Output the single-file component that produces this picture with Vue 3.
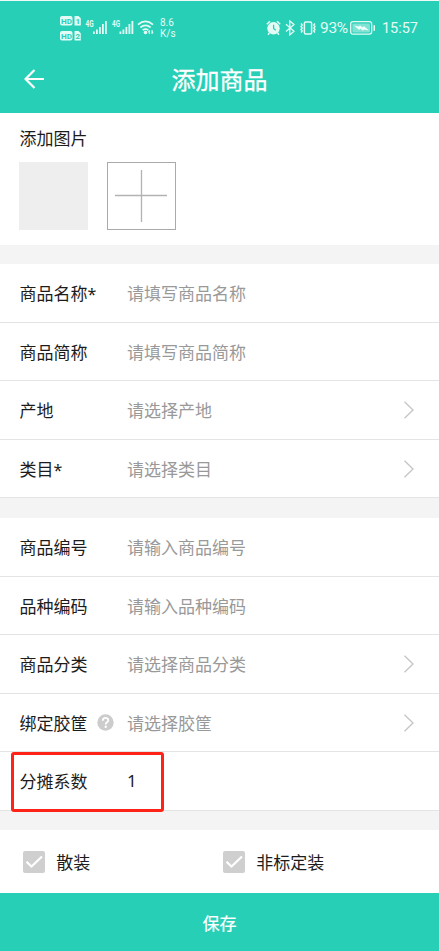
<script setup>
const basics = [
  { label: '商品名称', required: true, hint: '请填写商品名称' },
  { label: '商品简称', hint: '请填写商品简称' },
  { label: '产地', hint: '请选择产地', pick: true },
  { label: '类目', required: true, hint: '请选择类目', pick: true },
]
const details = [
  { label: '商品编号', hint: '请输入商品编号' },
  { label: '品种编码', hint: '请输入品种编码' },
  { label: '商品分类', hint: '请选择商品分类', pick: true },
  { label: '绑定胶筐', hint: '请选择胶筐', pick: true, help: true },
  { label: '分摊系数', value: '1', marked: true },
]
const groups = [basics, details]
const packs = ['散装', '非标定装']
</script>

<template>
  <div class="screen">
    <header class="head">
      <div class="status">
        <svg class="status-left" width="94" height="30" viewBox="0 0 94 30">
          <g fill="#e4fbf5">
            <rect x="0" y="1" width="12.5" height="9.4" rx="2" />
            <rect x="0" y="16" width="12.5" height="9.4" rx="2" />
            <path d="M14.5 1h4l2.3 2.3v7.1h-6.3zM14.5 16h4l2.3 2.3v7.1h-6.3z" />
            <g v-for="x in [33, 59.5]" :key="x">
              <rect :x="x" y="16.5" width="1.8" height="2.5" />
              <rect :x="x + 3" y="14.5" width="1.8" height="4.5" />
              <rect :x="x + 6" y="12" width="1.8" height="7" />
              <rect :x="x + 9" y="9" width="1.8" height="10" />
              <rect :x="x + 12" y="6" width="1.8" height="13" />
            </g>
            <circle cx="85.5" cy="17.5" r="1.8" />
            <path d="M89.3 19v-3.5l-1 1.1M92 15v3.7l1-1.2" stroke="#e4fbf5" stroke-width="1" />
          </g>
          <g fill="none" stroke="#e4fbf5" stroke-width="1.7">
            <path d="M78 9.6q7.5-6.5 15 0M80.4 12.5q5.1-4.4 10.2 0M82.7 15.2q2.8-2.2 5.6 0" />
          </g>
          <g>
            <text class="hd" x="1.1" y="8.6">HD</text>
            <text class="hd" x="1.1" y="23.6">HD</text>
            <text class="hd" x="15.6" y="8.6">1</text>
            <text class="hd" x="15.6" y="23.6">2</text>
            <text class="gen" x="25.5" y="11.5" textLength="8" lengthAdjust="spacingAndGlyphs">4G</text>
            <text class="gen" x="52" y="11.5" textLength="8" lengthAdjust="spacingAndGlyphs">4G</text>
          </g>
        </svg>
        <div class="rate"><span>8.6</span><span>K/s</span></div>
        <div class="status-right">
          <svg width="51" height="16" viewBox="0 0 51 16" fill="none" stroke="#e4fbf5">
            <circle cx="7.5" cy="8.3" r="6.2" fill="#e4fbf5" stroke="none" />
            <path d="M.8 4.3L4 1.2M14.2 4.3L11 1.2M3.3 13l-1.2 1.7M11.7 13l1.2 1.7" stroke-width="1.5" />
            <path d="M7.6 4.8v3.7l2.2 1.8" stroke="#27cfb6" stroke-width="1.3" />
            <path d="M20 4.3l8 7-4.2 3.6V.9L28 4.5l-8 7" stroke-width="1.3" />
            <rect x="38.4" y="2" width="7.2" height="12" rx="1.2" stroke-width="1.5" />
            <path d="M35 3.5l1.2 1.5L35 6.5 36.2 8 35 9.5l1.2 1.5L35 12.5M49 3.5L47.8 5 49 6.5 47.8 8 49 9.5 47.8 11l1.2 1.5" stroke-width="1.4" />
          </svg>
          <span class="percent">93%</span>
          <svg width="26" height="14" viewBox="0 0 26 14">
            <rect x=".7" y=".7" width="21" height="12.4" rx="2.4" fill="none" stroke="#e4fbf5" stroke-width="1.3" />
            <rect x="2.4" y="2.4" width="17.6" height="9" rx="1" fill="#7fe3d3" />
            <path d="M4 4.500l5 1 .8-1.300 3 2.200.9-1.300L19 9.600l-5.200-1-.7 1.200-3-2.200-.9 1.300z" fill="#f2fffc" />
            <rect x="23.5" y="4" width="1.5" height="6" rx=".7" fill="#e4fbf5" />
          </svg>
          <span class="clock">15:57</span>
        </div>
      </div>
      <div class="bar">
        <svg class="back" width="20" height="20" viewBox="0 0 20 20" fill="none" stroke="#fff" stroke-width="2.2">
          <path d="M20 10H1.5M10.5 1L1.5 10l9 9" />
        </svg>
        <h1>添加商品</h1>
      </div>
    </header>

    <section class="photos">
      <div class="photos-title">添加图片</div>
      <div class="tiles">
        <div class="tile"></div>
        <div class="tile add">
          <svg width="53" height="52" viewBox="0 0 53 52" stroke="#b2b2b2" stroke-width="1.3">
            <path d="M0 25.5h52M26.5 0v52" />
          </svg>
        </div>
      </div>
    </section>

    <section v-for="(rows, g) in groups" :key="g" class="group">
      <div v-for="row in rows" :key="row.label" class="row" :class="{ marked: row.marked }">
        <div class="label">
          <span>{{ row.label }}<span v-if="row.required" class="star">*</span></span>
          <svg v-if="row.help" class="help" width="17" height="17" viewBox="0 0 17 17">
            <circle cx="8.5" cy="8.5" r="8.2" fill="#ccc" />
            <path d="M5.8 6.7c0-3.7 5.5-3.5 5.5-.3 0 1.9-2.6 1.9-2.6 4" fill="none" stroke="#fff" stroke-width="1.8" />
            <circle cx="8.7" cy="12.7" r="1.2" fill="#fff" />
          </svg>
        </div>
        <div class="field" :class="{ filled: row.value }">{{ row.value || row.hint }}</div>
        <svg v-if="row.pick" width="12" height="18" viewBox="0 0 12 18" fill="none" stroke="#c4c4c4" stroke-width="1.3">
          <path d="M1.5 .8L10 9l-8.5 8.2" />
        </svg>
      </div>
    </section>

    <section class="packs">
      <div v-for="name in packs" :key="name" class="pack">
        <svg width="22" height="22" viewBox="0 0 22 22">
          <rect width="22" height="22" rx="2" fill="#cfcfcf" />
          <path d="M3.5 10.7l5 4.8L19 5.5" fill="none" stroke="#fff" stroke-width="2.2" />
        </svg>
        <span>{{ name }}</span>
      </div>
    </section>

    <button class="save">保存</button>
  </div>
</template>

<style>
body { margin: 0; }
</style>

<style scoped>
.screen {
  display: flex;
  flex-direction: column;
  width: 439px;
  height: 951px;
  overflow: hidden;
  background: #f4f4f4;
  color: #1c1c1c;
  font-family: "Noto Sans CJK SC", sans-serif;
  font-size: 17px;
  line-height: 24px;
}
.head {
  flex: none;
  height: 113px;
  box-sizing: border-box;
  border-top: 1px solid #eefaf7;
  background: #27cfb6;
}
.status {
  display: flex;
  height: 45px;
  padding: 14px 21px 0 60px;
  box-sizing: border-box;
  color: #e4fbf5;
  font-family: Roboto, sans-serif;
}
.rate {
  display: flex;
  flex-direction: column;
  padding: 2px 0 0 6px;
  font-size: 10px;
  line-height: 11px;
}
.hd { font: bold 8px Roboto, sans-serif; fill: #27cfb6; }
.gen { font: bold 8.5px Roboto, sans-serif; fill: #e4fbf5; }
.status-right {
  display: flex;
  align-items: center;
  height: 26px;
  margin-left: auto;
}
.percent { margin: 0 2px 0 3px; font-size: 15.5px; letter-spacing: -.3px; }
.clock { margin-left: 6px; padding-top: 1px; font-size: 14.5px; }
.bar {
  display: grid;
  grid-template-columns: 60px 1fr 60px;
  align-items: center;
  height: 66px;
}
.back { margin-left: 24px; }
h1 {
  margin: 0;
  color: #fff;
  font-size: 24px;
  font-weight: 400;
  line-height: 34px;
  text-align: center;
  -webkit-text-stroke: .3px #fff;
}
.photos {
  flex: none;
  height: 132px;
  padding: 13px 19px 0;
  box-sizing: border-box;
  background: #fff;
}
.photos-title { padding-left: .5px; }
.tiles { display: flex; gap: 19px; margin-top: 12px; }
.tile { width: 69px; height: 68px; background: #eee; }
.add {
  display: grid;
  place-items: center;
  box-sizing: border-box;
  border: 1px solid #aaa;
  background: #fff;
}
.group { flex: none; margin-top: 19px; background: #fff; }
.group + .group { margin-top: 20px; }
.row {
  display: flex;
  align-items: center;
  height: 58.5px;
  padding: 1px 24px 0 19.5px;
  box-sizing: border-box;
  border-bottom: 1px solid #e4e4e4;
}
.label { display: flex; align-items: center; gap: 9px; width: 107.5px; }
.star { font-family: "Noto Sans", sans-serif; font-size: 16px; line-height: 1; }
.field { flex: 1; color: #999; }
.filled { color: #1c1c1c; font-family: "Noto Sans", sans-serif; }
.marked { position: relative; }
.marked::after {
  content: "";
  position: absolute;
  left: 11px;
  top: 0;
  width: 153px;
  height: 60px;
  box-sizing: border-box;
  border: 3px solid #ff2217;
  border-radius: 3px;
}
.packs {
  display: flex;
  align-items: center;
  flex: 1;
  margin-top: 19.5px;
  padding-left: 23px;
  background: #fff;
}
.pack { display: flex; align-items: center; gap: 11.3px; width: 200px; }
.save {
  flex: none;
  height: 58px;
  padding: 2px 0 0;
  border: 0;
  background: #27cfb6;
  color: #fff;
  font: 400 17px/24px "Noto Sans CJK SC", sans-serif;
  -webkit-text-stroke: .2px #fff;
}
</style>
